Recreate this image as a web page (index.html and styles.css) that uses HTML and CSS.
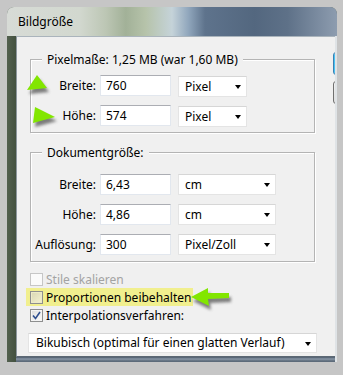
FILE: index.html
```html
<!DOCTYPE html>
<html lang="de">
<head>
<meta charset="utf-8">
<title>Bildgröße</title>
<link rel="stylesheet" href="styles.css">
</head>
<body>
<div class="screen">
  <div class="window">
    <div class="titlebar"><span class="title">Bildgröße</span></div>
    <div class="frame-body">
      <div class="client">
        <div class="main">
          <div class="group g1">
            <div class="legend">Pixelmaße: 1,25 MB (war 1,60 MB)</div>
            <div class="row">
              <span class="label">Breite:</span>
              <span class="input">760</span>
              <span class="select s-px">Pixel<i class="arrow"></i></span>
            </div>
            <div class="row">
              <span class="label">Höhe:</span>
              <span class="input">574</span>
              <span class="select s-px">Pixel<i class="arrow"></i></span>
            </div>
          </div>
          <div class="group g2">
            <div class="legend">Dokumentgröße:</div>
            <div class="row">
              <span class="label">Breite:</span>
              <span class="input">6,43</span>
              <span class="select s-cm">cm<i class="arrow"></i></span>
            </div>
            <div class="row">
              <span class="label">Höhe:</span>
              <span class="input">4,86</span>
              <span class="select s-cm">cm<i class="arrow"></i></span>
            </div>
            <div class="row">
              <span class="label">Auflösung:</span>
              <span class="input">300</span>
              <span class="select s-cm">Pixel/Zoll<i class="arrow"></i></span>
            </div>
          </div>
          <div class="checks">
            <div class="check disabled"><span class="box"></span>Stile skalieren</div>
            <div class="check hl"><span class="box"></span>Proportionen beibehalten</div>
            <div class="check"><span class="box checked"><svg viewBox="0 0 9 9" width="9" height="9"><path d="M1 4.5 L3.5 7.5 L8 1" fill="none" stroke="#2f4f8f" stroke-width="1.6"/></svg></span>Interpolationsverfahren:</div>
          </div>
          <div class="select s-wide">Bikubisch (optimal für einen glatten Verlauf)<i class="arrow"></i></div>
        </div>
        <div class="buttons">
          <span class="btn ok"></span>
          <span class="btn"></span>
        </div>
      </div>
    </div>
  </div>
  <svg class="marks" width="343" height="375" viewBox="0 0 343 375">
    <defs>
      <filter id="blur" x="-30%" y="-30%" width="160%" height="160%"><feGaussianBlur stdDeviation="1.4"/></filter>
    </defs>
    <g fill="#555" opacity="0.75" filter="url(#blur)" transform="translate(2,4)">
      <polygon points="37,75 27,90 47,88"/>
      <polygon points="35,107 33,123 55,117"/>
      <polygon points="191,297 208,288 208,293 229,293 229,298 208,299 209,306"/>
    </g>
    <g fill="#82e600">
      <polygon points="37,75 27,90 47,88"/>
      <polygon points="35,107 33,123 55,117"/>
      <polygon points="191,297 208,288 208,293 229,293 229,298 208,299 209,306"/>
    </g>
  </svg>
</div>
</body>
</html>
```

FILE: styles.css
```css
* { box-sizing: border-box; }
html, body { margin: 0; padding: 0; }
body {
  background: #c6c6c6;
  font-family: "Noto Sans", "DejaVu Sans", sans-serif;
  font-size: 12px;
  color: #000;
}
.screen {
  position: relative;
  width: 343px;
  height: 375px;
  overflow: hidden;
  padding: 7px 0 0 7px;
  background: #c6c6c6;
}
.window {
  width: 330px;
  height: 355px;
  border-radius: 7px 7px 0 0;
  overflow: hidden;
  display: flex;
  flex-direction: column;
  background: linear-gradient(to bottom, #9aa898 0%, #6d7d68 30%, #4a5a46 70%, #34442f 100%);
  box-shadow: inset 0 0 0 1px rgba(60,70,70,0.6);
}
.titlebar {
  height: 29px;
  flex: none;
  padding: 7px 0 0 11px;
  line-height: 16px;
  background: linear-gradient(to right, #d7dbd6 0%, #d2d8cf 22%, #bcc6b4 30%, #a2b198 36%, #b6c3aa 42%, #c5d3d9 50%, #90a6bc 55%, #5e738c 60%, #53677f 75%, #5e7188 85%, #8d9caf 100%);
}
.title { color: #000; }
.frame-body {
  flex: 1;
  display: flex;
  padding: 0 2px 5px 9px;
  background:
    linear-gradient(to right, #53604f 0px, #43513f 9px, transparent 9px),
    linear-gradient(to left, #dfe3e6 0px, #dfe3e6 2px, transparent 2px),
    linear-gradient(to bottom, transparent 320px, #4a5868 321px, #8a98a8 323px, #5d6b7a 325px);
}
.client {
  flex: 1;
  display: flex;
  overflow: hidden;
  background: #f0f0f0;
  border-top: 1px solid #aab4bc;
  border-left: 1px solid #8d979e;
  border-bottom: 1px solid #5c6874;
}
.main {
  width: 316px;
  flex: none;
  padding: 22px 0 0 13px;
}
.group {
  width: 285px;
  border: 1px solid #b4b4b4;
  box-shadow: 1px 1px 0 #ffffff, inset 1px 1px 0 #ffffff;
}
.g1 { padding-bottom: 6px; }
.g2 { margin-top: 19px; padding-bottom: 6px; }
.legend {
  width: fit-content;
  margin: -8px 0 0 11px;
  padding: 0 5px;
  line-height: 15px;
  background: #f0f0f0;
}
.row {
  display: flex;
  align-items: center;
  height: 21px;
  margin-top: 9px;
}
.g1 .legend + .row { margin-top: 8px; }
.g2 .legend + .row { margin-top: 14px; }
.label {
  width: 65px;
  text-align: right;
  margin-right: 4px;
}
.input {
  width: 71px;
  height: 21px;
  padding-left: 5px;
  line-height: 19px;
  background: #fff;
  border: 1px solid #e2e7ee;
  border-top-color: #abadb3;
  margin-right: 7px;
}
.select {
  position: relative;
  height: 21px;
  padding-left: 6px;
  line-height: 19px;
  background: #fff;
  border: 1px solid #e4e4e4;
  border-top-color: #d6d6d6;
}
.s-px { width: 69px; margin-top: 2px; }
.s-cm { width: 98px; }
.arrow {
  position: absolute;
  right: 5px;
  top: 8px;
  width: 0;
  height: 0;
  border-left: 3.5px solid transparent;
  border-right: 3.5px solid transparent;
  border-top: 4px solid #000;
}
.checks {
  margin: 8px 0 0 -4px;
}
.check {
  display: flex;
  align-items: center;
  width: fit-content;
  height: 18px;
  padding: 0 2px 0 4px;
}
.check.disabled { color: #a3a3a3; }
.check.hl { background: #f1ef8e; }
.box {
  width: 13px;
  height: 13px;
  margin-right: 3px;
  border: 1px solid #8e8f8f;
  background: linear-gradient(to bottom right, #dcdcdc, #fbfbfb);
  box-shadow: inset 0 0 0 1px #f4f4f4;
  display: flex;
  align-items: center;
  justify-content: center;
}
.disabled .box { border-color: #c6c6c6; background: #fafafa; box-shadow: none; }
.hl .box { background: linear-gradient(to bottom right, #d8d6b4, #f4f2d0); box-shadow: inset 0 0 0 1px #ecebc8; }
.box svg { display: block; }
.s-wide {
  width: 289px;
  height: 20px;
  margin: 9px 0 0 -2px;
  padding-left: 7px;
  line-height: 18px;
}
.buttons {
  flex: none;
  display: flex;
  flex-direction: column;
  padding-top: 15px;
  gap: 6px;
}
.btn {
  display: block;
  width: 75px;
  height: 23px;
  border: 1px solid #707070;
  border-radius: 3px;
  background: linear-gradient(#f2f2f2, #dcdcdc);
}
.btn.ok {
  border-color: #3c7fb1;
  background: linear-gradient(#e8f6fd, #bee6fd);
  box-shadow: inset 0 0 0 1px #48c4f4;
}
.marks {
  position: absolute;
  left: 0;
  top: 0;
  pointer-events: none;
}
```
